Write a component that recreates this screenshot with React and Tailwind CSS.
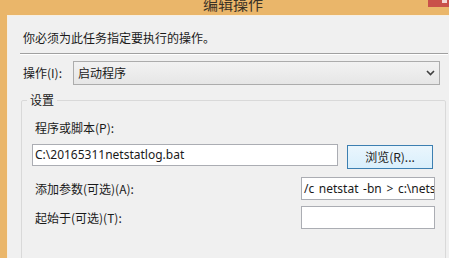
import React from "react";

const cjk = { fontFamily: '"Noto Sans CJK SC", "Noto Sans", sans-serif' };
const latin = { fontFamily: '"Noto Sans", "Open Sans", sans-serif' };

export default function App() {
  return (
    <div className="w-[449px] h-[258px] overflow-hidden bg-[#eab66a] flex flex-col text-[12px] leading-[16px] text-[#1a1a1a]" style={cjk}>
      {/* title bar */}
      <div className="h-[15px] shrink-0 flex relative">
        <div className="flex-1 flex justify-center">
          <span className="text-[15px] leading-[18px] mt-[-5px] ml-[38px] text-[#3a3226]">编辑操作</span>
        </div>
        <div className="w-[21px] h-[7px] bg-[#c9504a] flex justify-end">
          <span className="w-[5px] h-[3px] mr-[2px] bg-[#f3d6d4]"></span>
        </div>
      </div>
      {/* client */}
      <div className="flex-1 min-h-0 ml-[7px] bg-[#f0f0f0] border-t border-l border-[#f7efe2] flex flex-col">
        <div className="pl-[15px] mt-[14px]">你必须为此任务指定要执行的操作。</div>
        <div className="ml-[12px] mr-[1px] mt-[7px] h-[2px] border-t border-[#a0a0a0] border-b border-b-white"></div>
        <div className="flex items-center mt-[6px] pl-[15px] h-[24px]">
          <span className="w-[50px]">操作(I):</span>
          <div className="w-[367px] h-[24px] border border-[#acacac] bg-gradient-to-b from-[#f2f2f2] to-[#e6e6e6] flex items-center pl-[4px] pr-[4px]">
            <span className="flex-1">启动程序</span>
            <svg width="9" height="6" viewBox="0 0 9 6">
              <path d="M1 1 L4.5 4.5 L8 1" stroke="#404040" strokeWidth="1.6" fill="none" />
            </svg>
          </div>
        </div>
        <fieldset className="ml-[13px] mr-[3px] mt-[7px] h-[180px] shrink-0 border border-[#d9d9d9] rounded-[2px]">
          <legend className="ml-[5px] px-[3px] leading-[16px]">设置</legend>
          <div className="pl-[13px] mt-[12px]">程序或脚本(P):</div>
          <div className="flex items-start mt-[8px] pl-[10px]">
            <div className="w-[306px] h-[22px] border border-[#abadb3] bg-white flex items-center pl-[2px] text-[12px] whitespace-nowrap overflow-hidden" style={latin}>
              C:\20165311netstatlog.bat
            </div>
            <button className="ml-[9px] mt-px w-[86px] h-[24px] border border-[#3c7fb1] bg-gradient-to-b from-[#eaf6fd] to-[#d9effc] flex items-center justify-center text-[12px]" style={cjk}>
              浏览(R)...
            </button>
          </div>
          <div className="flex items-center mt-[8px] pl-[13px]">
            <span className="flex-1">添加参数(可选)(A):</span>
            <div className="w-[134px] h-[23px] mr-[10px] border border-[#abadb3] bg-white flex items-center pl-[2px] whitespace-nowrap overflow-hidden" style={{ ...latin, wordSpacing: "1.5px" }}>
              /c netstat -bn &gt; c:\netstatlog.txt
            </div>
          </div>
          <div className="flex items-center mt-[6px] pl-[13px]">
            <span className="flex-1">起始于(可选)(T):</span>
            <div className="w-[134px] h-[23px] mr-[10px] border border-[#abadb3] bg-white"></div>
          </div>
        </fieldset>
      </div>
    </div>
  );
}
